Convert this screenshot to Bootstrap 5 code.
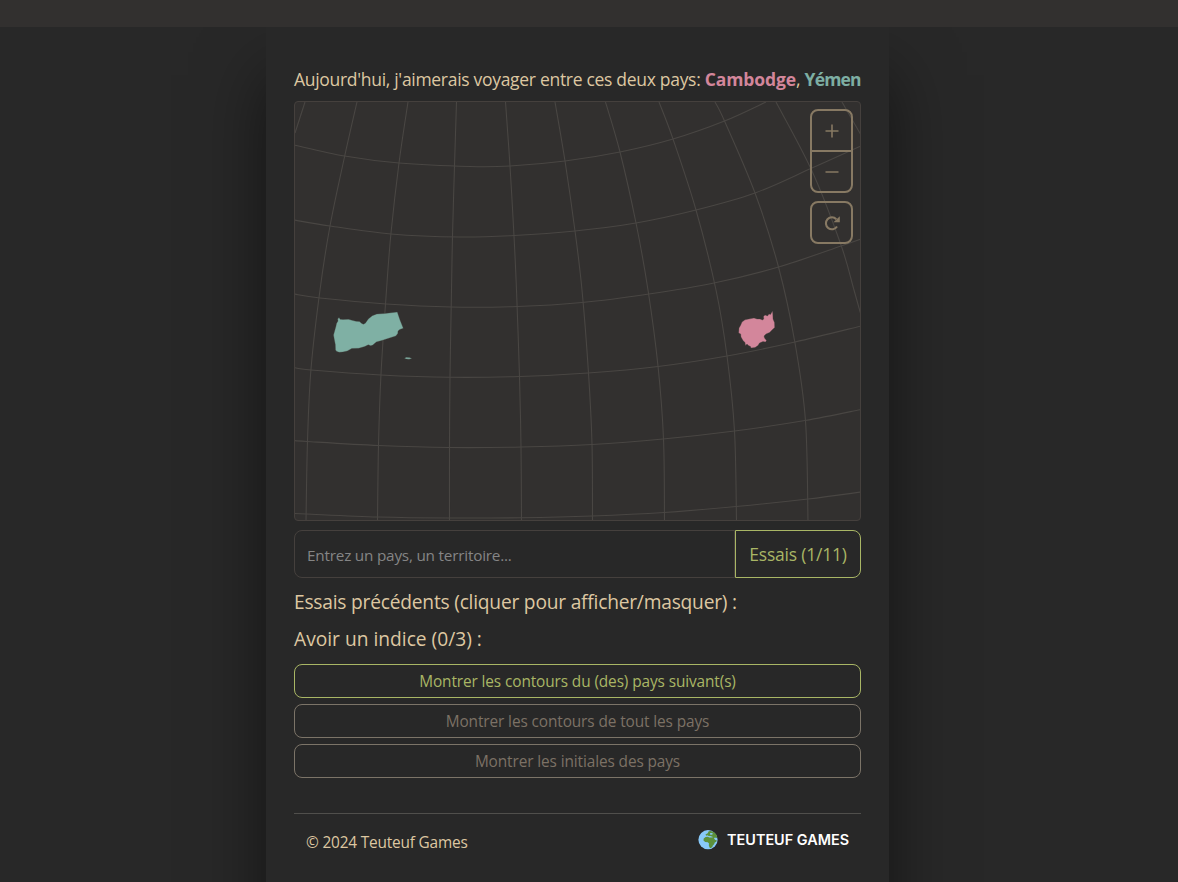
<!DOCTYPE html>
<html lang="fr" data-bs-theme="dark">
<head>
<meta charset="utf-8">
<meta name="viewport" content="width=device-width, initial-scale=1">
<title>Teuteuf Games</title>
<link href="https://cdn.jsdelivr.net/npm/bootstrap@5.3.0/dist/css/bootstrap.min.css" rel="stylesheet">
<style>
body{background:#282828;color:#ddc7a1;font-family:"Open Sans","Noto Sans",sans-serif;font-size:16px;height:882px;overflow:hidden}
.topbar{height:27px;background:#32302f}
.main-wrap{height:855px;overflow:hidden}
.game{width:623px;height:900px;margin-left:266px;padding:39px 28px 0;background:#282828;box-shadow:0 48px 64px rgba(0,0,0,.5)}
.prompt{font-size:17.5px;line-height:27px;height:27px;white-space:nowrap;margin-bottom:8px;letter-spacing:-.3px}
.pink{color:#d3869b;letter-spacing:-.1px}
.aqua{color:#7daea3;letter-spacing:-.8px}
.map{height:420px;background:#32302f;border:1px solid #45403d;border-radius:4px;overflow:hidden}
.map>svg{display:block;margin:-1px}
.grat path{fill:none;stroke:#494643;stroke-width:1.1}
.zoomer{right:7px;top:7px;width:43px}
.zoomer button{background:none;border:2px solid #877963;color:#877963;height:43px;border-radius:8px;padding:0}
.zoomer svg{display:block;margin:1px auto 0}
.guess{height:48px;margin-top:9px}
.guess .form-control{background:transparent;border:1px solid #45403d;border-radius:8px 0 0 8px;padding:2px 12px 0;font-size:15.3px;letter-spacing:-.21px;color:#ddc7a1}
.guess .form-control::placeholder{color:#858585;opacity:1}
.guess .btn{width:126px;border:1px solid #a9b665;color:#a9b665;border-radius:0 8px 8px 0;padding:0;font-size:17.5px;letter-spacing:-.22px;margin-left:0!important}
.head5{font-size:19.2px;line-height:24px;margin:0;white-space:nowrap;color:#ddc7a1}
.tries{letter-spacing:-.22px}
.hint{height:34px;border-radius:8px;border:1px solid #a9b665;color:#a9b665;padding:1px 0 0;font-size:15.4px;letter-spacing:-.11px;line-height:32px}
.hint.off{border-color:#7c7468;color:#7c7165}
.foot{border-top:1px solid #504f4c;margin-top:35px;padding:16px 12px 0}
.copy{font-size:15.4px;letter-spacing:-.18px;line-height:26px}
.brand{font:600 14.4px/20px Inter,sans-serif;color:#fff;gap:9px;height:20px}
</style>
<script src="https://cdn.jsdelivr.net/npm/bootstrap@5.3.0/dist/js/bootstrap.bundle.min.js"></script>
</head>
<body>
<div class="topbar"></div>
<div class="main-wrap">
<main class="game">
<p class="prompt">Aujourd'hui, j'aimerais voyager entre ces deux pays: <b class="pink">Cambodge</b>, <b class="aqua">Yémen</b></p>
<div class="map position-relative">
<svg width="567" height="420" viewBox="294 101 567 420">
<g class="grat" id="grat"></g>
<path fill="#7fb0a4" stroke="#45403d" stroke-width=".3" d="M336 326l.5-2.500 1.500-2.500-.3-2 1.300-1.500 1.200 1.800 2.800.2 5.500-.2 3.500 1 4 1 3.500.3 2 1.700 1.800.9 2-1 3-4.300 4-3.200 4.500-1.700 8-.5 12.500-1.500 2.700 8 3.300 8.300-3.500 1.200-1.800 1.500-.2 2.500-2 2.500-14 4.500-5.500 1.500-3.500 3-2 .8-2.500-1-3.500 1.700-6 1.800-7 .2-4.500 2.500-4.500 1-3.500.3-2.500-.8-1.300-1.500-.2-5.500-1-5-.8-4.500zM404.500 358.200l1.800-.9 3.200.3 2.400 1-2.800.6-3-.2z"/>
<path fill="#d3869b" stroke="#45403d" stroke-width=".3" d="M739 328l1.500-2.500 1.500-3.500 3-2.200 5-1 4-.8 3 1 3 0 2.500 1 1.300-1-.3-2.500 1.500-1.500 2.500 1 1.500-2 1.500.5 2-3.500.3 3 .2 5 1.500 3.500.2 5-2.200 2-3 3-3.500 1.500-2 2 .5 2 2 2.500-1 1.500-2.500-.5-3.500 1.500-1.500 2.500-3 2-4 .5-.5-1.500-2-1-1.500-1.500-1.500 1.500-.5-3-2-2-2-3.500-.3-3-2-1z"/>
</svg>
<div class="zoomer position-absolute d-flex flex-column">
<button class="rounded-bottom-0" aria-label="Zoom avant"><svg width="14" height="14" viewBox="0 0 14 14" stroke="currentColor" stroke-width="1.6"><path d="M7 .5v13M.5 7h13"/></svg></button>
<button class="rounded-top-0 mb-2" style="margin-top:-2px" aria-label="Zoom arrière"><svg width="14" height="14" viewBox="0 0 14 14" stroke="currentColor" stroke-width="1.6"><path d="M.5 7h13"/></svg></button>
<button aria-label="Réinitialiser"><svg width="16" height="16" viewBox="0 0 16 16" fill="none" stroke="currentColor" stroke-width="2.100"><path d="M13 11.500A6 6 0 1 1 12.300 4.200"/><path d="M9.500 7.200h6.300V1.200z" fill="currentColor" stroke="none"/></svg></button>
</div>
</div>
<div class="guess input-group flex-nowrap">
<input class="form-control" placeholder="Entrez un pays, un territoire..." aria-label="Pays">
<button class="btn">Essais (1/11)</button>
</div>
<h5 class="head5 tries fw-normal mt-2 pt-1">Essais précédents (cliquer pour afficher/masquer) :</h5>
<h5 class="head5 fw-normal" style="margin:13px 0">Avoir un indice (0/3) :</h5>
<div class="d-grid" style="gap:6px">
<button class="btn hint">Montrer les contours du (des) pays suivant(s)</button>
<button class="btn hint off">Montrer les contours de tout les pays</button>
<button class="btn hint off">Montrer les initiales des pays</button>
</div>
<footer class="foot d-flex justify-content-between">
<span class="copy">© 2024 Teuteuf Games</span>
<span class="brand d-flex align-items-center">
<svg width="20" height="20" viewBox="0 0 20 20"><circle cx="10" cy="9.700" r="9.600" fill="#88c9f9"/><path fill="#5c913b" d="M7.500 4.600l2.200-1.400 1-1.900 2-.4 3 1.200 2.600 2.500 1 2.800-1 .6-1.500-.5-.8 1 1.300 1.400 1.500.3-.5 1.500-1.500.8-.7 1.800-1.300 1.200-.5 1.500-1.800 1.300-1-.7-.7-2.300.2-1.700-1.200-1.300-2.600-.2-1.700-1.600.2-2.100 1.900-1.500 2.400-.2 1.200.8 1.500-.3-.5-.9-1.500-.4-1.200-.6-1.300.5z"/><path fill="#88c9f9" d="M12 3.200l2-.3 1 1-1.500.8-1.500-.3zM11 6l2 .3 2 .7-1 .6-2-.3z"/></svg>
<span>TEUTEUF GAMES</span></span>
</footer>
</main>
</div>
<script>
const lines=[
[305,102,295,133],
[357,102,344.5,157,330,226,320,290,311,369,307.5,441,306,521],
[408,102,399,163,391,233,386.5,290,381,374,378.5,445,377.5,521],
[456.5,102,454.5,166,452.5,236,451.5,290,450,377,449.5,447,449.5,521],
[505.5,102,510,166,514,236,516.5,290,519.5,377,521,447,521.5,521],
[555,102,565,161,575,231,582,290,588.5,373,592,444,592.5,521],
[605.5,102,620,152,636,223,648,290,658,366,663.5,439,664.5,521],
[659,102,673,139,696,210,716,290,727,356,734.5,431,736.5,521],
[715,102,724.5,121,755,193,778.5,267,795,343,805.5,421,808,521],
[776,102,812,171,841,245,854,290,861,315],
[842,102,861,135],
[294,145,344.5,156,399,163,470,166.5,510,166,565,161,620,152,673,139,724.5,121,766,102],
[294,220,330,226,391,234,460,237,514,235.5,575,231,636,223,696,210,755,193,812,168,861,146],
[294,294,320,298,386,304,451,307,517,306.5,582,302.5,649,294,714,283,778.5,267,841,246,861,239],
[294,367.5,311,370,381,375,450,377.3,519.5,376.5,588,373,658,366.5,727,356,795,342,861,326],
[294,440.5,307,441.5,378.5,445.5,449.5,447.5,521,447,592,444.5,663,439,734.5,431,805,420.5,861,409.5],
[294,513.5,306,514,378,517,449,518,521,517.7,592,516,664,512.5,736,506.5,808,499,861,492]];
// Catmull-Rom smoothing through the graticule nodes
document.getElementById('grat').innerHTML=lines.map(a=>{
const p=[];for(let i=0;i<a.length;i+=2)p.push([a[i],a[i+1]]);
let d='M'+p[0];
for(let i=0;i<p.length-1;i++){const q=p[i-1]||p[i],b=p[i],c=p[i+1],e=p[i+2]||c;
d+=`C${b[0]+(c[0]-q[0])/6},${b[1]+(c[1]-q[1])/6} ${c[0]-(e[0]-b[0])/6},${c[1]-(e[1]-b[1])/6} ${c}`}
return `<path d="${d}"/>`}).join('');
</script>
</body>
</html>
